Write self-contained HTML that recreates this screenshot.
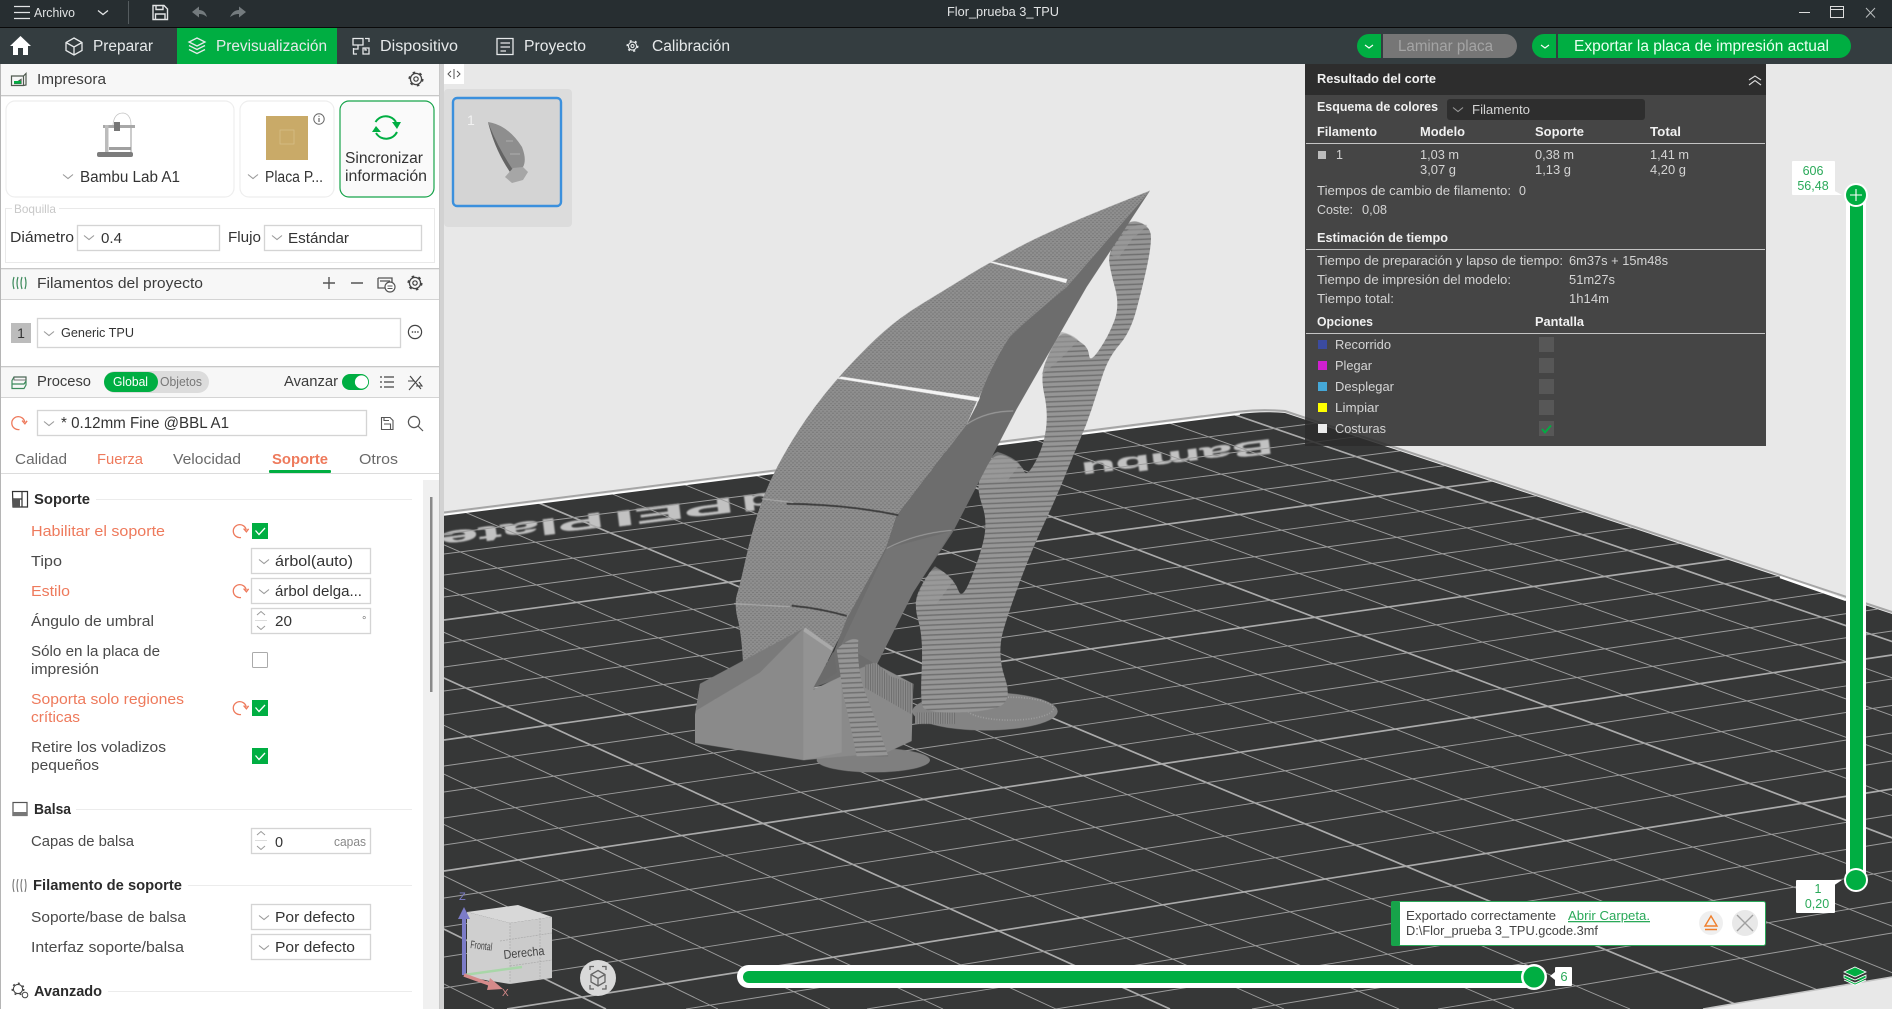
<!DOCTYPE html>
<html lang="es"><head><meta charset="utf-8"><title>Flor_prueba 3_TPU</title>
<style>
html,body{margin:0;padding:0;width:1892px;height:1009px;overflow:hidden;background:#e8e8e8}
svg{display:block;position:absolute;left:0;top:0}
text{font-family:"Liberation Sans",sans-serif;white-space:pre}
.n{font-size:15.5px;fill:#e6e9ea}
.h{font-size:15px;fill:#3c3c3c}
.l{font-size:14.5px;fill:#4a4a4a}
.o{font-size:14.5px;fill:#ee7a5c}
.v{font-size:14.5px;fill:#333}
.b{font-size:15px;font-weight:bold;fill:#2b2b2b}
.r{font-size:12.5px;fill:#d4d4d4}
.rb{font-size:12.5px;font-weight:bold;fill:#f0f0f0}
.ln{fill:none;stroke:#555;stroke-width:1.2}
.ni{fill:none;stroke:#e6e9ea;stroke-width:1.3}
.inp{fill:#fff;stroke:#d4d4d4;stroke-width:1.3}
</style></head><body>
<svg width="1892" height="1009" viewBox="0 0 1892 1009" xmlns="http://www.w3.org/2000/svg">
<defs>
<clipPath id="pl"><path d="M444 515L1240 414Q1262 411 1285 413L1892 614V977L1703 1009H444Z"/></clipPath>
<pattern id="tex" patternUnits="userSpaceOnUse" width="12" height="10"><rect width="12" height="10" fill="#8e8e8e"/><rect width="6" height="2" fill="#6f6f6f"/><rect x="6" y="5" width="6" height="2" fill="#767676"/><rect x="2" y="3" width="3" height="1" fill="#a6a6a6"/></pattern>
<pattern id="st" patternUnits="userSpaceOnUse" width="30" height="13" patternTransform="rotate(-2)"><rect width="30" height="13" fill="#969696"/><rect y="9" width="30" height="3.4" fill="#6b6b6b"/></pattern>
<pattern id="vs" patternUnits="userSpaceOnUse" width="7" height="30"><rect width="7" height="30" fill="#8c8c8c"/><rect width="3" height="30" fill="#6e6e6e"/></pattern>
<path id="ch" d="M-5-2.5L0 1.5L5-2.5" fill="none" stroke="#9a9a9a" stroke-width="1.1"/>
<g id="re" fill="none" stroke="#ee7a5c" stroke-width="1.3"><path d="M1 6.5A6.5 6.5 0 1 1 6.2-1"/><path d="M3.6-2.4L6.4 .8L8.6-2.2" stroke-width="1.4"/></g>
<g id="ck"><rect x="-8" y="-8" width="16" height="16" fill="#00ae42"/><path d="M-4.5-.5L-1 3.5L5-3" fill="none" stroke="#fff" stroke-width="1.3"/></g>
<g id="gear" fill="none" stroke="#444"><circle r="5.6" stroke-width="1.3"/><circle r="6.7" stroke-width="1.7" stroke-dasharray="2.6 4.4"/><circle r="2.2" stroke-width="1.2"/></g>
<g id="spin" fill="none" stroke="#9a9a9a" stroke-width="1"><path d="M-4-2L0-5.5L4-2"/><path d="M-4 9L0 12.5L4 9"/><path d="M-6 3.5H6" stroke="#ddd"/></g>
</defs>

<!-- canvas -->
<rect x="444" y="64" width="1448" height="945" fill="#e8e8e8"/>
<path d="M444 515L1240 414Q1262 411 1285 413L1892 614V977L1703 1009H444Z" fill="#363737"/>
<g clip-path="url(#pl)">
<g fill="#c2c2c2" stroke="#c2c2c2" stroke-width=".5" font-weight="bold" font-size="30" style="filter:blur(.8px)">
<text transform="translate(1272 439) rotate(172.8) scale(1.9 .72)">Bambu</text>
<text transform="translate(603 512) rotate(172.8) scale(2.3 .72)">Plate</text>
<text transform="translate(733 497) rotate(172.8) scale(2.5 .72)">PEI</text>
<text transform="translate(775 492) rotate(172.8) scale(1.9 .72)">d</text>
</g>
<path fill="none" stroke="#9c9c9c" stroke-width=".95" d="M-723 400L494 1009M-536 400L718 1009M-444 400L830 1009M-351 400L943 1009M-258 400L1056 1009M-74 400L1284 1009M18 400L1399 1009M110 400L1514 1009M202 400L1630 1009M384 400L1864 1009M475 400L1982 1009M566 400L2101 1009M656 400L2220 1009M836 400L2462 1009M927 400L2586 1009M1015 400L2708 1009M1104 400L2832 1009"/>
<path fill="none" stroke="#ababab" stroke-width="1.7" d="M-630 400L606 1009M-166 400L1170 1009M293 400L1747 1009M746 400L2340 1009M1192 400L2957 1009"/>
<path fill="none" stroke="#9c9c9c" stroke-width=".95" d="M444 534L1892 350M444 554L1892 368M444 575L1892 387M444 597L1892 407M444 643L1892 448M444 667L1892 470M444 691L1892 492M444 715L1892 514M444 766L1892 560M444 792L1892 583M444 818L1892 607M444 845L1892 631M444 898L1892 679M444 927L1892 705.5M444 957L1892 733M444 988L1892 761M686 1009L1892 815M867 1009L1892 842M1056 1009L1892 871M1252 1009L1892 902M1438 1009L1892 933"/>
<path fill="none" stroke="#ababab" stroke-width="1.7" d="M444 620L1892 428M444 740L1892 536M444 871L1892 655M507 1009L1892 789"/>
</g>
<path d="M444 512.5L1240 411.5Q1262 409 1285 411L1892 612" fill="none" stroke="#a6a6a6" stroke-width="2"/>
<path d="M444 515L1240 414" fill="none" stroke="#fff" stroke-width="1.6"/>
<path d="M1780 577L1846 600" fill="none" stroke="#fff" stroke-width="2.4"/>
<path d="M1703 1009L1892 977" fill="none" stroke="#c4c4c4" stroke-width="1.5"/>

<!-- model -->
<g transform="translate(660 180) scale(.33333 .3817)">
<ellipse cx="975" cy="1392" rx="218" ry="50" fill="#848484"/>
<ellipse cx="1050" cy="1385" rx="130" ry="30" fill="none" stroke="#a0a0a0" stroke-width="4" stroke-dasharray="3 5"/>
<rect x="765" y="1395" width="120" height="30" fill="url(#vs)"/>
<path fill="url(#st)" d="M790 1382Q780 1370 785 1285Q790 1200 775 1155Q760 1110 775 1080Q790 1050 807.5 1030Q825 1010 855 1030Q885 1050 895 1075Q905 1100 927.5 1055Q950 1010 967.5 955Q985 900 967.5 855Q950 810 957.5 790Q965 770 987.5 740Q1010 710 1047.5 727.5Q1085 745 1092.5 762.5Q1100 780 1125 740Q1150 700 1157.5 655Q1165 610 1152.5 560Q1140 510 1157.5 475Q1175 440 1190 417.5Q1205 395 1230 407.5Q1255 420 1270 430Q1285 440 1287.5 460Q1290 480 1317.5 445Q1345 410 1362.5 370Q1380 330 1365 282.5Q1350 235 1347.5 212.5Q1345 190 1372.5 145Q1400 100 1435 110Q1470 120 1472.5 145Q1475 170 1460 230Q1445 290 1427.5 345Q1410 400 1377.5 432.5Q1345 465 1327.5 512.5Q1310 560 1295 600Q1280 640 1260 680Q1240 720 1215 775Q1190 830 1155 895Q1120 960 1085 1040Q1050 1120 1030 1180Q1010 1240 1035 1305Q1060 1370 1010 1382Q960 1395 880 1395Q800 1395 790 1382Z"/>
<path fill="#9b9b9b" opacity=".6" d="M1350 195Q1400 105 1462 118Q1440 140 1420 150L1375 205ZM1145 510Q1180 410 1205 398Q1240 405 1255 420L1200 470ZM955 790Q990 720 1012 712Q1060 725 1080 745L1040 790ZM765 1110Q800 1030 825 1012Q860 1030 880 1050L830 1110Z"/>
<ellipse cx="640" cy="1520" rx="170" ry="32" fill="#7f7f7f"/>
<path fill="url(#tex)" d="M1470 28Q1200 120 1095 167.5Q990 215 925 250Q860 285 780 327.5Q700 370 625 435Q550 500 495 560Q440 620 395 685Q350 750 325 800Q300 850 282.5 905Q265 960 252.5 1010Q240 1060 231 1085Q222 1110 233 1150Q245 1190 250 1280L430 1180L520 1230L680 960L710 880L920 640L950 580L1050 410L1220 280Z"/>
<path fill="#6d6d6d" d="M1470 28L1220 280Q1110 360 1050 410Q990 490 950 590L920 640L710 880L680 960L560 1150L520 1240L460 1330L650 1270L760 1080L880 920L1070 600L1280 280Z"/>
<path fill="#747474" d="M680 965L875 920L760 1080L650 1270L545 1215Z"/>
<path fill="none" stroke="#999" stroke-width="3" d="M920 640Q980 605 1060 605M680 965Q770 925 875 918"/>
<path fill="#f4f4f4" d="M985 215L1000 214L1222 260L1218 270ZM530 520L545 515L960 570L955 580Z"/>
<path fill="none" stroke="#3e3e3e" stroke-width="5" d="M380 848Q560 850 715 878M395 1115Q480 1122 560 1142"/>
<path fill="none" stroke="#a8a8a8" stroke-width="3" d="M305 835L400 845M222 1110L390 1118"/>
<path fill="#8a8a8a" d="M105 1400L120 1320L430 1175L520 1230L460 1335L545 1300L640 1265L760 1320L755 1470L680 1500L430 1520L105 1475Z"/>
<path fill="#7a7a7a" d="M108 1390L120 1320L430 1175L300 1290Z"/>
<path fill="#939393" d="M430 1180L520 1230L460 1335L545 1300V1500L430 1520Z"/>
<path fill="#a9a9a9" d="M435 1172L520 1225L515 1233L430 1182Z"/>
<path fill="url(#vs)" d="M615 1270L650 1265L690 1300L760 1320L755 1400L615 1330Z"/>
<path fill="url(#st)" d="M530 1230Q570 1195 595 1205Q590 1270 610 1330Q650 1420 685 1510L590 1510Q570 1420 550 1350Z"/>
<path fill="#6b6b6b" d="M460 1330L520 1235L530 1290Z"/>
</g>

<!-- results panel -->
<rect x="1305" y="64" width="461" height="31" fill="#2d2d2d"/>
<rect x="1305" y="95" width="461" height="351" fill="#2c2c2c" fill-opacity=".865"/>
<text class="rb" x="1317" y="83" textLength="119" lengthAdjust="spacingAndGlyphs">Resultado del corte</text>
<path d="M1749 80L1755 76L1761 80M1749 85L1755 80.5L1761 85" fill="none" stroke="#ddd" stroke-width="1.1"/>
<text class="rb" x="1317" y="111" textLength="121" lengthAdjust="spacingAndGlyphs">Esquema de colores</text>
<rect x="1447" y="99" width="198" height="21" rx="3" fill="#2e2e2e"/>
<use href="#ch" x="1458" y="110"/>
<text class="r" x="1472" y="114" textLength="58" lengthAdjust="spacingAndGlyphs">Filamento</text>
<text class="rb" x="1317" y="136" textLength="60" lengthAdjust="spacingAndGlyphs">Filamento</text>
<text class="rb" x="1420" y="136" textLength="45" lengthAdjust="spacingAndGlyphs">Modelo</text>
<text class="rb" x="1535" y="136" textLength="49" lengthAdjust="spacingAndGlyphs">Soporte</text>
<text class="rb" x="1650" y="136" textLength="31" lengthAdjust="spacingAndGlyphs">Total</text>
<rect x="1306" y="143" width="459" height="1" fill="#c4c4c4"/>
<rect x="1318" y="151" width="8" height="8" fill="#bdbdbd"/>
<text class="r" x="1336" y="159">1</text>
<text class="r" x="1420" y="159" textLength="39" lengthAdjust="spacingAndGlyphs">1,03 m</text>
<text class="r" x="1420" y="174" textLength="36" lengthAdjust="spacingAndGlyphs">3,07 g</text>
<text class="r" x="1535" y="159" textLength="39" lengthAdjust="spacingAndGlyphs">0,38 m</text>
<text class="r" x="1535" y="174" textLength="36" lengthAdjust="spacingAndGlyphs">1,13 g</text>
<text class="r" x="1650" y="159" textLength="39" lengthAdjust="spacingAndGlyphs">1,41 m</text>
<text class="r" x="1650" y="174" textLength="36" lengthAdjust="spacingAndGlyphs">4,20 g</text>
<text class="r" x="1317" y="195" textLength="194" lengthAdjust="spacingAndGlyphs">Tiempos de cambio de filamento:</text>
<text class="r" x="1519" y="195">0</text>
<text class="r" x="1317" y="214" textLength="36" lengthAdjust="spacingAndGlyphs">Coste:</text>
<text class="r" x="1362" y="214" textLength="25" lengthAdjust="spacingAndGlyphs">0,08</text>
<text class="rb" x="1317" y="242" textLength="131" lengthAdjust="spacingAndGlyphs">Estimación de tiempo</text>
<rect x="1306" y="249" width="459" height="1" fill="#c4c4c4"/>
<text class="r" x="1317" y="265" textLength="246" lengthAdjust="spacingAndGlyphs">Tiempo de preparación y lapso de tiempo:</text>
<text class="r" x="1569" y="265" textLength="99" lengthAdjust="spacingAndGlyphs">6m37s + 15m48s</text>
<text class="r" x="1317" y="284" textLength="194" lengthAdjust="spacingAndGlyphs">Tiempo de impresión del modelo:</text>
<text class="r" x="1569" y="284" textLength="46" lengthAdjust="spacingAndGlyphs">51m27s</text>
<text class="r" x="1317" y="303" textLength="77" lengthAdjust="spacingAndGlyphs">Tiempo total:</text>
<text class="r" x="1569" y="303" textLength="40" lengthAdjust="spacingAndGlyphs">1h14m</text>
<text class="rb" x="1317" y="326" textLength="56" lengthAdjust="spacingAndGlyphs">Opciones</text>
<text class="rb" x="1535" y="326" textLength="49" lengthAdjust="spacingAndGlyphs">Pantalla</text>
<rect x="1306" y="333" width="459" height="1" fill="#c4c4c4"/>
<rect x="1318" y="340" width="9" height="9" fill="#3b4ba0"/><text class="r" x="1335" y="349" textLength="56" lengthAdjust="spacingAndGlyphs">Recorrido</text>
<rect x="1318" y="361" width="9" height="9" fill="#d020d0"/><text class="r" x="1335" y="370" textLength="37" lengthAdjust="spacingAndGlyphs">Plegar</text>
<rect x="1318" y="382" width="9" height="9" fill="#45a8d8"/><text class="r" x="1335" y="391" textLength="59" lengthAdjust="spacingAndGlyphs">Desplegar</text>
<rect x="1318" y="403" width="9" height="9" fill="#ffff00"/><text class="r" x="1335" y="412" textLength="44" lengthAdjust="spacingAndGlyphs">Limpiar</text>
<rect x="1318" y="424" width="9" height="9" fill="#ececec"/><text class="r" x="1335" y="433" textLength="51" lengthAdjust="spacingAndGlyphs">Costuras</text>
<g fill="#575757"><rect x="1539" y="337" width="15" height="15"/><rect x="1539" y="358" width="15" height="15"/><rect x="1539" y="379" width="15" height="15"/><rect x="1539" y="400" width="15" height="15"/><rect x="1539" y="421" width="15" height="15"/></g>
<path d="M1542 429L1545 432.5L1551 425.5" fill="none" stroke="#00ae42" stroke-width="1.8"/>

<!-- thumbnail -->
<rect x="444" y="64" width="20" height="20" fill="#fff"/>
<path d="M451 71L448 74L451 77M457 71L460 74L457 77M454 69V79" fill="none" stroke="#555" stroke-width="1"/>
<rect x="444" y="89" width="128" height="138" rx="4" fill="#dcdcdc"/>
<rect x="453" y="98" width="108" height="108" rx="4" fill="#d4d4d4" stroke="#3b90dd" stroke-width="2.4"/>
<text x="467" y="125" font-size="14" fill="#f2f2f2">1</text>
<path d="M488 122Q508 125 522 147Q527 160 523 167L510 172Q495 150 488 122Z" fill="#8e8e8e"/>
<path d="M488 122Q495 150 510 172L513 170Q497 146 488 122Z" fill="#646464"/>
<path d="M505 177L513 168L523 167L528 172L523 180L512 183Z" fill="#a6a6a6"/>
<path d="M506 141L513 141M510 154L520 154" stroke="#b8b8b8" stroke-width=".7"/>

<!-- view cube -->
<path d="M467 912L510 923V984L467 977Z" fill="#cfcfcf"/>
<path d="M510 923L552 917V978L510 984Z" fill="#cbcbcb"/>
<path d="M467 912L518 905L552 917L510 923Z" fill="#d8d8d8"/>
<path d="M510 923V984M540 918V980M500 941L552 933M510 966L552 960" fill="none" stroke="#aaa" stroke-width=".7" stroke-dasharray="2 1"/>
<text transform="translate(470 948) rotate(7)" font-size="11" fill="#444" textLength="22" lengthAdjust="spacingAndGlyphs">Frontal</text>
<text transform="translate(504 959) rotate(-6)" font-size="12.5" fill="#444" textLength="41" lengthAdjust="spacingAndGlyphs">Derecha</text>
<path d="M464 975L522 967" stroke="#a8d6a8" stroke-width="2.5" fill="none"/>
<path d="M464 918V975" stroke="#7c7cc8" stroke-width="4" fill="none"/><path d="M458 919L464 907L470 919Z" fill="#7c7cc8"/>
<path d="M464 975L492 985" stroke="#d68a8a" stroke-width="3.5" fill="none"/><path d="M490 978L503 989L487 990Z" fill="#d68a8a"/>
<text x="459" y="900" font-size="11" fill="#7c7cc8">Z</text>
<text x="502" y="996" font-size="10" fill="#d68a8a">X</text>
<circle cx="598" cy="978" r="18" fill="#d9d9d9"/>
<path d="M598 970.5L605 974.5V982L598 986L591 982V974.5ZM591 974.5L598 978.5L605 974.5M598 978.5V986M590 970V966.5H594M602 966.5H606V970M606 985V989H602M594 989H590V985" fill="none" stroke="#666" stroke-width="1.3"/>

<!-- horizontal slider -->
<rect x="737" y="965" width="800" height="23" rx="11.5" fill="#fff"/>
<rect x="743" y="971" width="791" height="12" rx="6" fill="#00ae42"/>
<circle cx="1534" cy="977" r="13" fill="#fff"/><circle cx="1534" cy="977" r="10.5" fill="#00ae42"/>
<path d="M1555 972L1550 976L1555 980Z" fill="#fff"/>
<rect x="1555" y="967" width="17" height="19" rx="1" fill="#fff"/>
<text x="1564" y="981" font-size="13" fill="#2aa959" text-anchor="middle">6</text>

<!-- vertical slider -->
<rect x="1846" y="185" width="20" height="705" rx="10" fill="#fff"/>
<rect x="1850" y="195" width="13" height="685" fill="#00ae42"/>
<circle cx="1856" cy="195" r="12" fill="#fff"/><circle cx="1856" cy="195" r="10" fill="#00ae42"/>
<path d="M1850 195H1862M1856 189V201" stroke="#fff" stroke-width="1.1"/>
<circle cx="1856" cy="880" r="12" fill="#fff"/><circle cx="1856" cy="880" r="10" fill="#00ae42"/>
<rect x="1792" y="161" width="43" height="34" rx="1" fill="#fff"/>
<path d="M1833 190L1842 195H1833Z" fill="#fff"/>
<text x="1813" y="175" font-size="12.5" fill="#2aa959" text-anchor="middle">606</text>
<text x="1813" y="190" font-size="12.5" fill="#2aa959" text-anchor="middle">56,48</text>
<rect x="1796" y="880" width="39" height="33" rx="1" fill="#fff"/>
<path d="M1833 880H1842L1833 886Z" fill="#fff"/>
<text x="1818" y="893" font-size="12.5" fill="#2aa959" text-anchor="middle">1</text>
<text x="1817" y="908" font-size="12.5" fill="#2aa959" text-anchor="middle">0,20</text>
<path d="M1855 967L1866 972L1855 977L1844 972ZM1844 975L1855 980L1866 975L1866 978L1855 983L1844 978ZM1844 980L1855 985L1866 980" fill="#00ae42" stroke="#fff" stroke-width=".8"/>

<!-- toast -->
<rect x="1391.5" y="901.5" width="374" height="44" rx="2" fill="#fff" stroke="#2aa959"/>
<rect x="1391" y="901" width="9" height="45" rx="2" fill="#17a34a"/>
<text x="1406" y="920" font-size="12.8" fill="#444" textLength="150" lengthAdjust="spacingAndGlyphs">Exportado correctamente</text>
<text x="1568" y="920" font-size="12.8" fill="#2aa959" text-decoration="underline" textLength="82" lengthAdjust="spacingAndGlyphs">Abrir Carpeta.</text>
<text x="1406" y="935" font-size="12.8" fill="#444" textLength="192" lengthAdjust="spacingAndGlyphs">D:\Flor_prueba 3_TPU.gcode.3mf</text>
<circle cx="1711" cy="923" r="12" fill="#efefef"/>
<path d="M1711 916L1717 926H1705ZM1705 929.5H1717" fill="none" stroke="#ef7f2c" stroke-width="1.4"/>
<circle cx="1745" cy="923" r="13" fill="#e8e8e8"/>
<path d="M1737 915L1753 931M1753 915L1737 931" stroke="#a0a0a0" stroke-width="1.4"/>

<!-- title bar -->
<rect x="0" y="0" width="1892" height="27" fill="#272e31"/>
<rect x="0" y="27" width="1892" height="1" fill="#0a0a0a"/>
<path d="M14 6.5H30M14 12.5H30M14 18.5H30" stroke="#e2e4e5" stroke-width="1.3"/>
<text x="34" y="17" font-size="12.5" fill="#e2e4e5" textLength="41" lengthAdjust="spacingAndGlyphs">Archivo</text>
<path d="M98 10.5L103 14.5L108 10.5" fill="none" stroke="#e2e4e5" stroke-width="1.3"/>
<rect x="128" y="1" width="1" height="23" fill="#555c5f"/>
<path d="M153 5.5H164L167.5 9V19.5H153ZM156 5.5V9.5H163V5.5M155.5 19.5V14H165V19.5" fill="none" stroke="#e2e4e5" stroke-width="1.4"/>
<path d="M192 12L199 6.5V10Q205 10 207 17Q203 13.5 199 14V17.5Z" fill="#747b7e"/>
<path d="M246 12L239 6.5V10Q233 10 230 17Q235 13.5 239 14V17.5Z" fill="#747b7e"/>
<text x="947" y="16" font-size="12.5" fill="#e2e4e5" textLength="112" lengthAdjust="spacingAndGlyphs">Flor_prueba 3_TPU</text>
<path d="M1799 12.5H1810" stroke="#ddd" stroke-width="1"/>
<rect x="1830.5" y="6.5" width="13" height="11" fill="none" stroke="#ddd" stroke-width="1"/><path d="M1830 9.5H1844" stroke="#ddd"/>
<path d="M1866 8L1875 17.5M1875 8L1866 17.5" stroke="#b8bcbd" stroke-width="1"/>

<!-- nav bar -->
<rect x="0" y="28" width="1892" height="36" fill="#343d40"/>
<path d="M20.5 36L31 46H28V55H23V48H18V55H13V46H10Z" fill="#fff"/>
<path class="ni" d="M74 38L82 42.5V50.5L74 55L66 50.5V42.5ZM66 42.5L74 47L82 42.5M74 47V55"/>
<text class="n" x="93" y="51" textLength="60" lengthAdjust="spacingAndGlyphs">Preparar</text>
<rect x="177" y="28" width="160" height="36" fill="#00ae42"/>
<path class="ni" d="M197 38L205 42L197 46L189 42ZM189 45.5L197 49.5L205 45.5M189 49.5L197 53.5L205 49.5"/>
<text class="n" x="216" y="51" textLength="111" lengthAdjust="spacingAndGlyphs">Previsualización</text>
<path class="ni" d="M353 38.5H363V45H353ZM358 45V49H353.5M353.5 48V54H357M365 38.5H369V42M363 48H369V54H363ZM365 48V50H367"/>
<text class="n" x="380" y="51" textLength="78" lengthAdjust="spacingAndGlyphs">Dispositivo</text>
<path class="ni" d="M497 38.5H513V54.5H497ZM500.5 43H510M500.5 47H510M500.5 51H506"/>
<text class="n" x="524" y="51" textLength="62" lengthAdjust="spacingAndGlyphs">Proyecto</text>
<g transform="translate(632.5 46) scale(.85)"><circle r="4.8" class="ni"/><circle r="6.2" fill="none" stroke="#e6e9ea" stroke-width="1.8" stroke-dasharray="2.4 4"/><circle r="1.8" class="ni"/></g>
<text class="n" x="652" y="51" textLength="78" lengthAdjust="spacingAndGlyphs">Calibración</text>
<path d="M1369 34H1381V58H1369A12 12 0 0 1 1369 34Z" fill="#00ae42"/>
<path d="M1383 34H1505A12 12 0 0 1 1505 58H1383Z" fill="#767676"/>
<path d="M1365 45L1369 48L1373 45" fill="none" stroke="#fff" stroke-width="1.1"/>
<text x="1398" y="51" font-size="15.5" fill="#a4a4a4" textLength="95" lengthAdjust="spacingAndGlyphs">Laminar placa</text>
<path d="M1544 34H1556V58H1544A12 12 0 0 1 1544 34Z" fill="#00ae42"/>
<path d="M1558 34H1839A12 12 0 0 1 1839 58H1558Z" fill="#00ae42"/>
<path d="M1541 45L1545 48L1549 45" fill="none" stroke="#fff" stroke-width="1.1"/>
<text x="1574" y="51" font-size="15.5" fill="#e8fff0" textLength="255" lengthAdjust="spacingAndGlyphs">Exportar la placa de impresión actual</text>

<!-- left panel -->
<rect x="0" y="64" width="440" height="945" fill="#fff"/>
<rect x="440" y="64" width="4" height="945" fill="#d2d2d2"/>
<rect x="0" y="64" width="1" height="945" fill="#b5b5b5"/>
<rect x="439" y="64" width="1" height="945" fill="#c8c8c8"/>

<!-- impresora -->
<rect x="1" y="64" width="438" height="31" fill="#f7f7f7"/><rect x="1" y="95" width="438" height="1.3" fill="#c8c8c8"/>
<path d="M11.5 76H23.5L26 73.5V85L23.5 85.5H11.5ZM23.5 76V85.5M14 83.5H21V79.5L15 83.5" fill="none" stroke="#4f5a4f" stroke-width="1.2"/><rect x="14" y="81" width="7" height="2.6" fill="#00ae42"/>
<text class="h" x="37" y="84" textLength="69" lengthAdjust="spacingAndGlyphs">Impresora</text>
<use href="#gear" x="416" y="79"/>
<rect x="6" y="101" width="228" height="96" rx="9" fill="#fff" stroke="#eee" stroke-width="1.2"/>
<rect x="240" y="101" width="94" height="96" rx="9" fill="#fff" stroke="#eee" stroke-width="1.2"/>
<rect x="340" y="101" width="94" height="96" rx="9" fill="#fafafa" stroke="#17a34a" stroke-width="1.2"/>
<path d="M113 125Q114 113 123 113Q131 114 131 125" fill="none" stroke="#c4c4c4" stroke-width=".8"/>
<rect x="103" y="125" width="32" height="3" fill="#a8a8a8"/><rect x="105" y="125" width="3.5" height="28" fill="#bcbcbc"/><rect x="114" y="122" width="6" height="9" fill="#777"/>
<rect x="109" y="147" width="22" height="3" fill="#a0a0a0"/><rect x="97" y="152" width="36" height="5" rx="2" fill="#7c7c7c"/><path d="M131 128V152" stroke="#999" stroke-width="1"/>
<use href="#ch" x="68" y="177"/>
<text class="v" x="80" y="182" style="font-size:15.5px" textLength="100" lengthAdjust="spacingAndGlyphs">Bambu Lab A1</text>
<rect x="266" y="116" width="42" height="44" fill="#c9aa68"/><rect x="280" y="130" width="14" height="14" fill="none" stroke="#d8bf8a" stroke-width=".7"/>
<circle cx="319" cy="119" r="5.2" fill="none" stroke="#666" stroke-width="1"/><path d="M319 118V122M319 115.8V116.8" stroke="#666" stroke-width="1.2"/>
<use href="#ch" x="253" y="177"/>
<text class="v" x="265" y="182" style="font-size:15.5px" textLength="58" lengthAdjust="spacingAndGlyphs">Placa P...</text>
<path d="M375.5 122A12 12 0 0 1 396 122M397 132A12 12 0 0 1 376 133" fill="none" stroke="#00ae42" stroke-width="2"/>
<path d="M392 122H401L397 129ZM372 132H381L376 126Z" fill="#00ae42"/>
<text class="v" x="345" y="163" style="font-size:15.5px" textLength="78" lengthAdjust="spacingAndGlyphs">Sincronizar</text>
<text class="v" x="345" y="181" style="font-size:15.5px" textLength="82" lengthAdjust="spacingAndGlyphs">información</text>
<rect x="5.5" y="208.5" width="429" height="54" fill="none" stroke="#e9e9e9"/>
<rect x="12" y="202" width="47" height="12" fill="#fff"/>
<text x="14" y="213" font-size="12" fill="#c8c8c8" textLength="42" lengthAdjust="spacingAndGlyphs">Boquilla</text>
<text class="v" x="10" y="242" style="font-size:15px" textLength="64" lengthAdjust="spacingAndGlyphs">Diámetro</text>
<rect class="inp" x="77.5" y="225.5" width="142" height="25"/><use href="#ch" x="89" y="238"/>
<text class="v" x="101" y="243" textLength="21" lengthAdjust="spacingAndGlyphs">0.4</text>
<text class="v" x="228" y="242" style="font-size:15px" textLength="33" lengthAdjust="spacingAndGlyphs">Flujo</text>
<rect class="inp" x="264.5" y="225.5" width="157" height="25"/><use href="#ch" x="277" y="238"/>
<text class="v" x="288" y="243" textLength="61" lengthAdjust="spacingAndGlyphs">Estándar</text>

<!-- filamentos -->
<rect x="1" y="268" width="438" height="31" fill="#f7f7f7"/><rect x="1" y="268" width="438" height="1.3" fill="#c8c8c8"/><rect x="1" y="299" width="438" height="1" fill="#d4d4d4"/>
<path d="M14 277Q12 283 14 289M18 277Q16 283 18 289M22 277Q20 283 22 289M25 277Q27 283 25 289" fill="none" stroke="#3d8a5c" stroke-width="1.2"/>
<text class="h" x="37" y="288" textLength="166" lengthAdjust="spacingAndGlyphs">Filamentos del proyecto</text>
<path d="M323 283H335M329 277V289M351 283H363" stroke="#555" stroke-width="1.4"/>
<path d="M378 278H392V282M378 278V288H386M380 281H390" fill="none" stroke="#555" stroke-width="1.3"/><circle cx="390" cy="287" r="5" fill="#fff" stroke="#555" stroke-width="1.2"/><path d="M387.5 286H392.5M387.5 288.5H392.5" stroke="#555"/>
<use href="#gear" x="415" y="283"/>
<rect x="11" y="323" width="20" height="20" fill="#bcbcbc"/><text x="21" y="338" font-size="14" fill="#333" text-anchor="middle">1</text>
<rect class="inp" x="37.5" y="318.5" width="363" height="29"/><use href="#ch" x="49" y="334"/>
<text x="61" y="337" font-size="13" fill="#333" textLength="73" lengthAdjust="spacingAndGlyphs">Generic TPU</text>
<circle cx="415" cy="332" r="6.6" fill="none" stroke="#444" stroke-width="1.2"/><path d="M411.8 332H418.6" stroke="#444" stroke-width="1.5" stroke-dasharray="1.4 1.3"/>

<!-- proceso -->
<rect x="1" y="367" width="438" height="30" fill="#f7f7f7"/><rect x="1" y="366" width="438" height="1.3" fill="#c8c8c8"/><rect x="1" y="397" width="438" height="1" fill="#d4d4d4"/>
<path d="M12 380.5L14 377H26V381L24 384H12ZM12 384.5V388.5L14 388.5H24L26 385V381" fill="none" stroke="#3d8a5c" stroke-width="1.2"/><rect x="14" y="377" width="12" height="3" fill="none" stroke="#555" stroke-width=".8"/>
<text class="h" x="37" y="386" textLength="54" lengthAdjust="spacingAndGlyphs">Proceso</text>
<rect x="104" y="371" width="105" height="22" rx="11" fill="#dcdcdc"/>
<rect x="104" y="372" width="54" height="20" rx="10" fill="#00ae42"/>
<text x="113" y="386" font-size="13" fill="#fff" textLength="35" lengthAdjust="spacingAndGlyphs">Global</text>
<text x="160" y="386" font-size="13" fill="#777" textLength="42" lengthAdjust="spacingAndGlyphs">Objetos</text>
<text class="h" x="284" y="386" textLength="54" lengthAdjust="spacingAndGlyphs">Avanzar</text>
<rect x="342" y="374" width="27" height="16" rx="8" fill="#00ae42"/><circle cx="361.5" cy="382" r="6.6" fill="#fff"/>
<path d="M384 377H394M384 382H394M384 387H394" stroke="#444" stroke-width="1.3"/><path d="M380 377H382M380 382H382M380 387H382" stroke="#444" stroke-width="1.3"/>
<path d="M410 376L421 389M408 381H414L411 377M416 386H422L419 382M409 390L421 376" fill="none" stroke="#444" stroke-width="1.1"/>
<use href="#re" x="18.5" y="423"/>
<rect class="inp" x="37.5" y="410.5" width="329" height="25"/><use href="#ch" x="49" y="424"/>
<text class="v" x="61" y="428" style="font-size:15.5px" textLength="168" lengthAdjust="spacingAndGlyphs">* 0.12mm Fine @BBL A1</text>
<path d="M381.5 417.5H390L393 420.5V429.5H381.5ZM384 424H390.5V429.5M384 417.5V420.5H389" fill="none" stroke="#555" stroke-width="1.1"/>
<circle cx="414" cy="422" r="5.6" fill="none" stroke="#555" stroke-width="1.2"/><path d="M418 426L423 431" stroke="#555" stroke-width="1.2"/>
<text x="15" y="464" font-size="15" fill="#6a6a6a" textLength="52" lengthAdjust="spacingAndGlyphs">Calidad</text>
<text x="97" y="464" font-size="15" fill="#ee7a5c" textLength="46" lengthAdjust="spacingAndGlyphs">Fuerza</text>
<text x="173" y="464" font-size="15" fill="#6a6a6a" textLength="68" lengthAdjust="spacingAndGlyphs">Velocidad</text>
<text x="272" y="464" font-size="15" font-weight="bold" fill="#ee7a5c" textLength="56" lengthAdjust="spacingAndGlyphs">Soporte</text>
<text x="359" y="464" font-size="15" fill="#6a6a6a" textLength="39" lengthAdjust="spacingAndGlyphs">Otros</text>
<rect x="269" y="470" width="62" height="3" rx="1" fill="#00ae42"/>
<rect x="1" y="473" width="438" height="1" fill="#dcdcdc"/>
<rect x="423" y="480" width="16" height="529" fill="#f0f0f0"/>
<rect x="430" y="497" width="2.5" height="195" fill="#8a8a8a"/>

<!-- soporte -->
<path d="M12.5 491.5H27.5V507H13ZM22 491.5V507M13 499H22" fill="none" stroke="#333" stroke-width="1.2"/><rect x="13" y="499" width="7" height="8" fill="#555"/>
<text class="b" x="34" y="504" textLength="56" lengthAdjust="spacingAndGlyphs">Soporte</text>
<rect x="96" y="499" width="316" height="1" fill="#ececec"/>
<text class="o" x="31" y="536" textLength="134" lengthAdjust="spacingAndGlyphs">Habilitar el soporte</text>
<use href="#re" x="240" y="531"/><use href="#ck" x="260" y="531"/>
<text class="l" x="31" y="566" textLength="31" lengthAdjust="spacingAndGlyphs">Tipo</text>
<rect class="inp" x="251.5" y="548.5" width="119" height="25"/><use href="#ch" x="264" y="562"/>
<text class="v" x="275" y="566" textLength="78" lengthAdjust="spacingAndGlyphs">árbol(auto)</text>
<text class="o" x="31" y="596" textLength="39" lengthAdjust="spacingAndGlyphs">Estilo</text>
<use href="#re" x="240" y="591"/>
<rect class="inp" x="251.5" y="578.5" width="119" height="25"/><use href="#ch" x="264" y="592"/>
<text class="v" x="275" y="596" textLength="87" lengthAdjust="spacingAndGlyphs">árbol delga...</text>
<text class="l" x="31" y="626" textLength="123" lengthAdjust="spacingAndGlyphs">Ángulo de umbral</text>
<rect class="inp" x="251.5" y="608.5" width="119" height="25"/><use href="#spin" x="261" y="617"/>
<text class="v" x="275" y="626" textLength="17" lengthAdjust="spacingAndGlyphs">20</text>
<text x="362" y="624" font-size="11" fill="#777">°</text>
<text class="l" x="31" y="656" textLength="129" lengthAdjust="spacingAndGlyphs">Sólo en la placa de</text>
<text class="l" x="31" y="674" textLength="68" lengthAdjust="spacingAndGlyphs">impresión</text>
<rect x="252.5" y="652.5" width="15" height="15" rx="1" fill="#fff" stroke="#aaa"/>
<text class="o" x="31" y="704" textLength="153" lengthAdjust="spacingAndGlyphs">Soporta solo regiones</text>
<text class="o" x="31" y="722" textLength="49" lengthAdjust="spacingAndGlyphs">críticas</text>
<use href="#re" x="240" y="708"/><use href="#ck" x="260" y="708"/>
<text class="l" x="31" y="752" textLength="135" lengthAdjust="spacingAndGlyphs">Retire los voladizos</text>
<text class="l" x="31" y="770" textLength="68" lengthAdjust="spacingAndGlyphs">pequeños</text>
<use href="#ck" x="260" y="756"/>

<!-- balsa -->
<rect x="13" y="802.5" width="14" height="13" fill="none" stroke="#555" stroke-width="1.2"/><rect x="13" y="812" width="14" height="4" fill="#777"/>
<text class="b" x="34" y="814" textLength="37" lengthAdjust="spacingAndGlyphs">Balsa</text>
<rect x="76" y="809" width="336" height="1" fill="#ececec"/>
<text class="l" x="31" y="846" textLength="103" lengthAdjust="spacingAndGlyphs">Capas de balsa</text>
<rect class="inp" x="251.5" y="828.5" width="119" height="25"/><use href="#spin" x="261" y="837"/>
<text class="v" x="275" y="847">0</text>
<text x="334" y="846" font-size="12.5" fill="#888" textLength="32" lengthAdjust="spacingAndGlyphs">capas</text>

<!-- filamento -->
<path d="M14 879Q12 885 14 892M18 879Q16 885 18 892M22 879Q20 885 22 892M25 879Q27 885 25 892" fill="none" stroke="#777" stroke-width="1.1"/>
<text class="b" x="33" y="890" textLength="149" lengthAdjust="spacingAndGlyphs">Filamento de soporte</text>
<rect x="188" y="885" width="224" height="1" fill="#ececec"/>
<text class="l" x="31" y="922" textLength="155" lengthAdjust="spacingAndGlyphs">Soporte/base de balsa</text>
<rect class="inp" x="251.5" y="904.5" width="119" height="25"/><use href="#ch" x="264" y="918"/>
<text class="v" x="275" y="922" textLength="80" lengthAdjust="spacingAndGlyphs">Por defecto</text>
<text class="l" x="31" y="952" textLength="153" lengthAdjust="spacingAndGlyphs">Interfaz soporte/balsa</text>
<rect class="inp" x="251.5" y="934.5" width="119" height="25"/><use href="#ch" x="264" y="948"/>
<text class="v" x="275" y="952" textLength="80" lengthAdjust="spacingAndGlyphs">Por defecto</text>

<!-- avanzado -->
<g fill="none" stroke="#444"><circle cx="18" cy="989" r="4.6" stroke-width="1.1"/><circle cx="18" cy="989" r="5.8" stroke-width="1.4" stroke-dasharray="2 3.4"/><circle cx="25" cy="995" r="2.8" stroke-width="1"/></g>
<text class="b" x="34" y="996" textLength="68" lengthAdjust="spacingAndGlyphs">Avanzado</text>
<rect x="108" y="991" width="304" height="1" fill="#ececec"/>
</svg>
</body></html>
